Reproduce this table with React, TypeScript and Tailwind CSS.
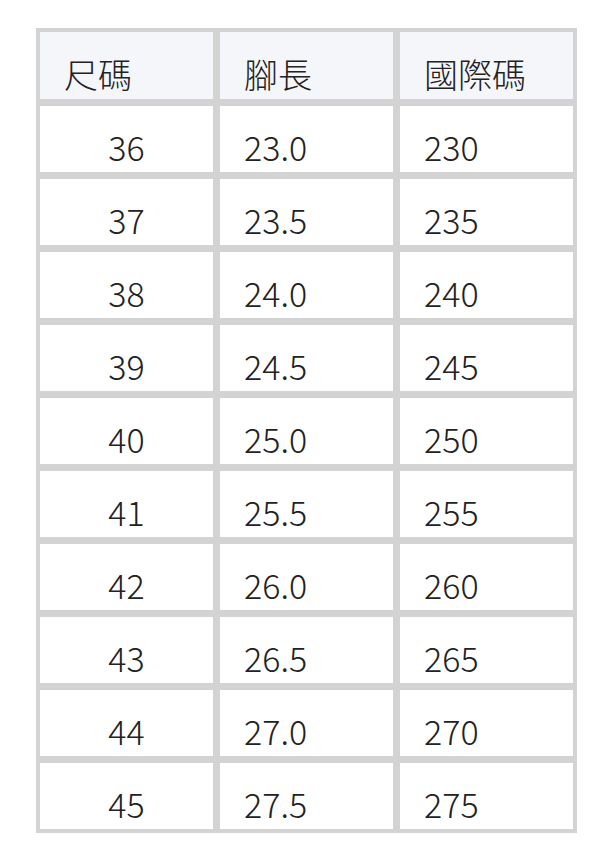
const rows = [
    ["36", "23.0", "230"],
    ["37", "23.5", "235"],
    ["38", "24.0", "240"],
    ["39", "24.5", "245"],
    ["40", "25.0", "250"],
    ["41", "25.5", "255"],
    ["42", "26.0", "260"],
    ["43", "26.5", "265"],
    ["44", "27.0", "270"],
    ["45", "27.5", "275"],
];

const headers = ["尺碼", "腳長", "國際碼"];

export default function App() {
    return (
        <div
            className="min-h-screen bg-white pt-[28px] pl-[36px] text-[#222] text-[34px] leading-[34px] font-light"
            style={{ fontFamily: '"Noto Sans CJK TC", "Noto Sans", sans-serif' }}
        >
            <div className="grid w-[541px] grid-cols-[173px_173px_173px] gap-[7px] bg-[#d3d3d3] p-[4px]">
                {headers.map((h) => (
                    <div key={h} className="h-[67px] bg-[#f5f6fa] pt-[25px] pl-[24px]">
                        {h}
                    </div>
                ))}
                {rows.map((r) =>
                    r.map((cell, i) => (
                        <div
                            key={r[0] + "-" + i}
                            className={
                                i === 0
                                    ? "h-[66px] bg-white pt-[24px] text-center"
                                    : "h-[66px] bg-white pt-[24px] pl-[24px]"
                            }
                        >
                            {cell}
                        </div>
                    ))
                )}
            </div>
        </div>
    );
}
